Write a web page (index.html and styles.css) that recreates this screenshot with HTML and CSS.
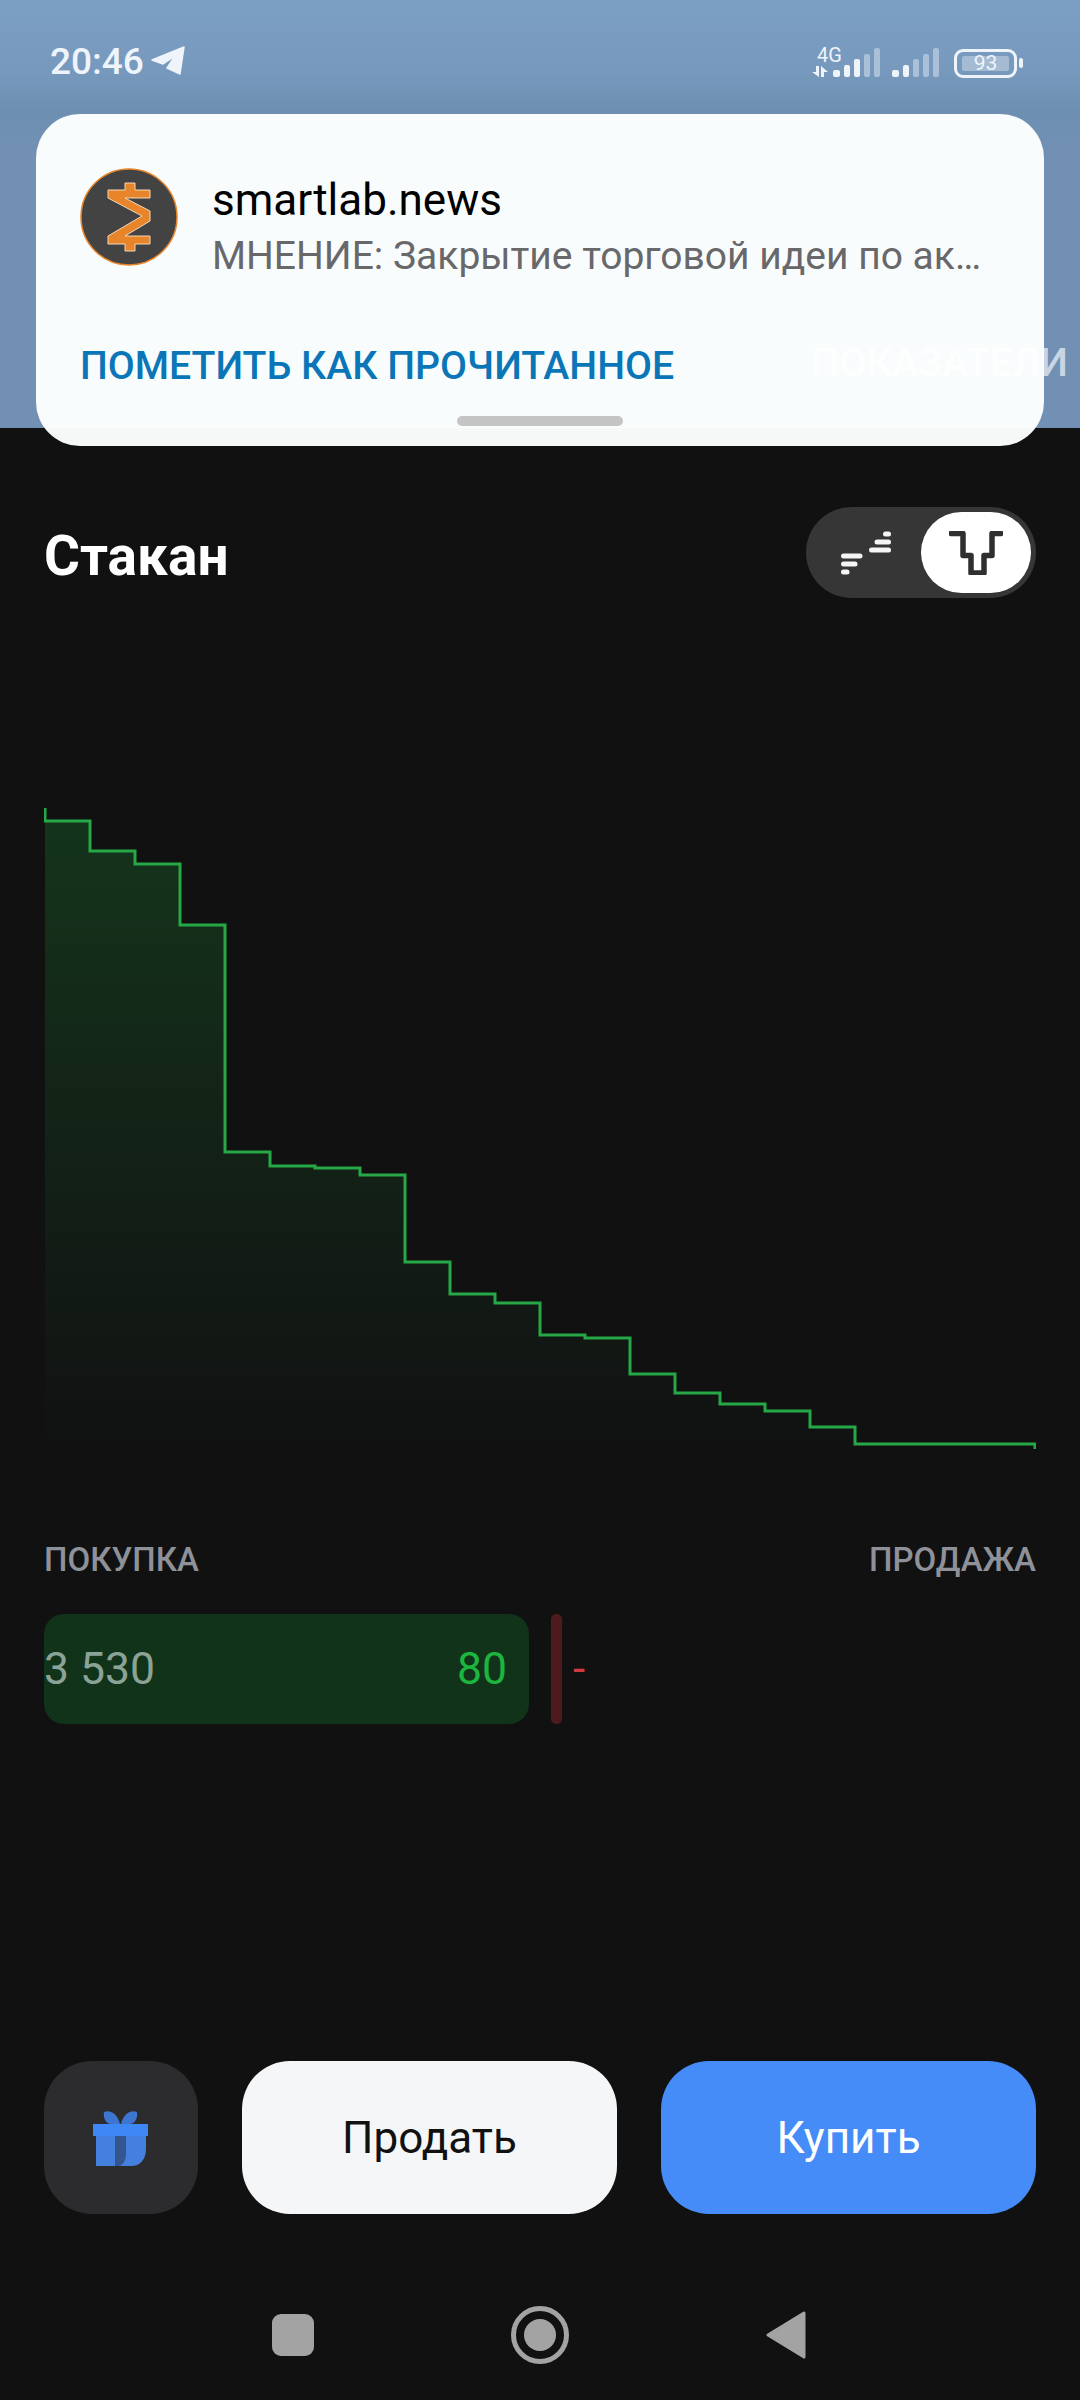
FILE: index.html
```html
<!DOCTYPE html>
<html lang="ru">
    <head>
        <meta charset="UTF-8" />
        <meta name="viewport" content="width=device-width, initial-scale=1.0" />
        <title>Стакан</title>
        <link rel="stylesheet" href="styles.css">
    </head>
    <body>
        <article id="screen">
            <header class="top">
                <div class="status">
                    <div class="status-left">
                        <span class="clock">20:46</span>
                        <svg class="plane" width="36" height="30" viewBox="0 0 36 30">
                            <path d="M1 14 L33 1 L29 28 L16 22 L24 10 L12 18 Z" fill="#eef4fa" stroke="#eef4fa" stroke-width="1.5" stroke-linejoin="round" />
                        </svg>
                    </div>
                    <div class="status-right">
                        <div class="net">
                            <span class="net-label">4G</span>
                            <svg class="net-arrows" width="16" height="11" viewBox="0 0 16 11">
                                <path d="M4 0 H7 V11 L0 6 H4 Z M9 0 L16 6 H12 V11 H9 Z" fill="#eef4fa" />
                            </svg>
                        </div>
                        <svg class="bars" width="48" height="30" viewBox="0 0 48 30">
                            <rect x="0" y="22" width="7" height="7" rx="2" fill="#eef4fa" />
                            <rect x="11" y="17" width="6" height="12" rx="2" fill="#eef4fa" />
                            <rect x="21" y="11" width="6" height="18" rx="2" fill="#eef4fa" />
                            <rect x="31" y="6" width="6" height="23" rx="2" fill="#a9c0d8" />
                            <rect x="41" y="0" width="6" height="29" rx="2" fill="#a9c0d8" />
                        </svg>
                        <svg class="bars bars-two" width="48" height="30" viewBox="0 0 48 30">
                            <rect x="0" y="22" width="7" height="7" rx="2" fill="#eef4fa" />
                            <rect x="11" y="17" width="6" height="12" rx="2" fill="#eef4fa" />
                            <rect x="21" y="11" width="6" height="18" rx="2" fill="#a9c0d8" />
                            <rect x="31" y="6" width="6" height="23" rx="2" fill="#a9c0d8" />
                            <rect x="41" y="0" width="6" height="29" rx="2" fill="#a9c0d8" />
                        </svg>
                        <div class="battery">
                            <div class="battery-box">
                                <span class="battery-fill">93</span>
                            </div>
                            <span class="battery-tip"></span>
                        </div>
                    </div>
                </div>
                <div class="tabs">ПОКАЗАТЕЛИ</div>
            </header>

            <section class="notice">
                <div class="notice-main">
                    <svg class="logo" width="98" height="98" viewBox="0 0 98 98">
                        <circle cx="49" cy="49" r="48" fill="#434343" stroke="#e8842a" stroke-width="1.5" />
                        <path d="M45 15 H55 V22 H70 V30 H45 L70 43 V53 L45 68 H70 V76 H55 V83 H45 V76 H28 V68 L62 48 L28 30 V22 H45 Z" fill="#e8842a" stroke="#f3d9b8" stroke-width="1" />
                    </svg>
                    <div class="notice-text">
                        <div class="notice-title">smartlab.news</div>
                        <div class="notice-body">МНЕНИЕ: Закрытие торговой идеи по ак…</div>
                    </div>
                </div>
                <div class="notice-action">ПОМЕТИТЬ КАК ПРОЧИТАННОЕ</div>
                <div class="handle"></div>
            </section>

            <section class="book">
                <div class="book-head">
                    <h2>Стакан</h2>
                    <div class="toggle">
                        <div class="toggle-off">
                            <svg width="50" height="44" viewBox="0 0 50 44">
                                <g fill="none" stroke="#f5f5f5" stroke-width="5" stroke-linecap="round">
                                    <path d="M2.5 25 H19" />
                                    <path d="M2.5 33 H14" />
                                    <path d="M2.5 41 H6" />
                                    <path d="M30.5 19 H47.5" />
                                    <path d="M36 11 H47.5" />
                                    <path d="M44.5 3 H47.5" />
                                </g>
                            </svg>
                        </div>
                        <div class="toggle-on">
                            <svg width="54" height="44" viewBox="0 0 54 44">
                                <path d="M2 2.5 H14 V24.5 H22 V42 H35 V24.5 H43 V2.5 H52" fill="none" stroke="#2f2f2f" stroke-width="5.5" stroke-linecap="round" stroke-linejoin="round" />
                            </svg>
                        </div>
                    </div>
                </div>

                <svg class="depth" width="992" height="660" viewBox="44 800 992 660">
                    <defs>
                        <linearGradient id="fade" x1="0" y1="0" x2="0" y2="1">
                            <stop offset="0" stop-color="#1a6f2c" stop-opacity="0.38" />
                            <stop offset="1" stop-color="#1a6f2c" stop-opacity="0" />
                        </linearGradient>
                    </defs>
                    <path d="M45 808 V821 H90 V851 H135 V864 H180 V925 H225 V1152 H270 V1166 H315 V1168 H360 V1175 H405 V1262 H450 V1294 H495 V1303 H540 V1335 H585 V1338 H630 V1374 H675 V1393 H720 V1404 H765 V1411 H810 V1427 H855 V1444 H1035 V1449 H45 Z" fill="url(#fade)" />
                    <path d="M45 808 V821 H90 V851 H135 V864 H180 V925 H225 V1152 H270 V1166 H315 V1168 H360 V1175 H405 V1262 H450 V1294 H495 V1303 H540 V1335 H585 V1338 H630 V1374 H675 V1393 H720 V1404 H765 V1411 H810 V1427 H855 V1444 H1035 V1449" fill="none" stroke="#25a845" stroke-width="3" />
                </svg>

                <div class="sides">
                    <span>ПОКУПКА</span>
                    <span>ПРОДАЖА</span>
                </div>

                <div class="levels">
                    <div class="bid">
                        <span class="price">3 530</span>
                        <span class="qty">80</span>
                    </div>
                    <div class="ask"></div>
                    <span class="ask-value">-</span>
                </div>
            </section>

            <footer class="actions">
                <button type="button" class="gift">
                    <svg width="56" height="56" viewBox="0 0 56 56">
                        <path d="M11 2 C18 -1 25 5 27 14 H18 C13 14 10 8 11 2 Z M44 2 C37 -1 30 5 28 14 H37 C42 14 45 8 44 2 Z" fill="#3d76d0" />
                        <rect x="0" y="14" width="55" height="12" fill="#3f87f5" />
                        <path d="M3 26 H53 V38 C53 50 47 56 38 56 H3 Z" fill="#4480de" />
                        <path d="M22 26 H33 V44 C33 50 30 55 26 56 H22 Z" fill="#34568f" />
                    </svg>
                </button>
                <button type="button" class="sell">Продать</button>
                <button type="button" class="buy">Купить</button>
            </footer>

            <nav class="nav">
                <span class="nav-square"></span>
                <span class="nav-home"><span class="nav-dot"></span></span>
                <svg width="40" height="48" viewBox="0 0 40 48">
                    <path d="M2 24 L38 2 V46 Z" fill="#a3a3a3" stroke="#a3a3a3" stroke-width="3" stroke-linejoin="round" />
                </svg>
            </nav>
        </article>
    </body>
</html>
```

FILE: styles.css
```css
* {
    box-sizing: border-box;
}

body {
    margin: 0;
    background-color: #111112;
    font-family: Roboto, "Noto Sans", sans-serif;
}

#screen {
    position: relative;
    display: flex;
    flex-direction: column;
    width: 1080px;
    height: 2400px;
    overflow: hidden;
}

.top {
    height: 428px;
    padding: 38px 12px 0 50px;
    background: linear-gradient(#7b9fc3, #7699bd 70px, #6d8fb1 112px, #7190b3 140px, #7190b3);
}

.status {
    display: flex;
    justify-content: space-between;
    align-items: center;
    height: 46px;
    margin-right: 45px;
}

.status-left {
    display: flex;
    align-items: center;
    gap: 7px;
}

.clock {
    font-size: 37px;
    font-weight: 500;
    color: #eef4fa;
}

.status-right {
    display: flex;
    align-items: flex-end;
}

.net {
    display: flex;
    flex-direction: column;
    width: 21px;
    color: #eef4fa;
}

.net-label {
    font-size: 20px;
    line-height: 20px;
    margin-left: 5px;
    margin-bottom: 1px;
}

.net-arrows {
    display: block;
    flex-shrink: 0;
    margin-bottom: 1px;
}

.bars {
    display: block;
}

.bars-two {
    margin-left: 11px;
}

.battery {
    display: flex;
    align-items: center;
    margin-left: 14px;
}

.battery-box {
    width: 63px;
    height: 29px;
    padding: 4px 5px;
    border: 3px solid #eef4fa;
    border-radius: 9px;
}

.battery-fill {
    display: block;
    width: 100%;
    height: 100%;
    border-radius: 2px;
    background-color: #a4bbd3;
    font-size: 21px;
    line-height: 15px;
    text-align: center;
    color: #eef4fa;
}

.battery-tip {
    width: 4px;
    height: 10px;
    margin-left: 2px;
    border-radius: 2px;
    background-color: #eef4fa;
}

.tabs {
    margin-top: 257px;
    font-size: 39.5px;
    font-weight: 500;
    line-height: 44px;
    text-align: right;
    color: rgba(255, 255, 255, 0.65);
}

/* всплывающее уведомление лежит поверх шапки */
.notice {
    position: absolute;
    top: 114px;
    left: 36px;
    width: 1008px;
    height: 332px;
    padding: 54px 44px 0;
    border-radius: 44px;
    background-color: rgba(254, 255, 255, 0.97);
}

.notice-main {
    display: flex;
    gap: 34px;
}

.logo {
    flex-shrink: 0;
}

.notice-text {
    padding-top: 8px;
}

.notice-title {
    font-size: 44px;
    line-height: 48px;
    color: #000;
}

.notice-body {
    margin-top: 7px;
    font-size: 39px;
    line-height: 50px;
    color: #68686b;
}

.notice-action {
    margin-top: 62px;
    font-size: 39.2px;
    font-weight: 500;
    line-height: 46px;
    color: #0a76b8;
}

.handle {
    position: absolute;
    left: 421px;
    bottom: 20px;
    width: 166px;
    height: 10px;
    border-radius: 5px;
    background-color: #c4c4c4;
}

.book {
    flex: 1;
    padding: 79px 44px 0;
}

.book-head {
    display: flex;
    justify-content: space-between;
    align-items: center;
    height: 91px;
}

h2 {
    margin: 6px 0 0;
    font-size: 55px;
    font-weight: 700;
    color: #fff;
}

.toggle {
    display: flex;
    align-items: center;
    justify-content: space-between;
    width: 230px;
    height: 91px;
    padding: 0 5px 0 35px;
    border-radius: 46px;
    background-color: #363636;
}

.toggle-off {
    display: flex;
}

.toggle-on {
    display: flex;
    align-items: center;
    justify-content: center;
    width: 110px;
    height: 81px;
    border-radius: 41px;
    background-color: #fff;
}

.depth {
    display: block;
    margin-top: 202px;
}

.sides {
    display: flex;
    justify-content: space-between;
    margin-top: 81px;
    font-size: 33px;
    font-weight: 500;
    line-height: 38px;
    color: #8e9199;
}

.levels {
    display: flex;
    align-items: center;
    height: 110px;
    margin-top: 35px;
}

.bid {
    display: flex;
    align-items: center;
    justify-content: space-between;
    width: 485px;
    height: 100%;
    padding-right: 22px;
    border-radius: 20px;
    background-color: #113319;
    font-size: 44.5px;
}

.price {
    color: #8aa396;
}

.qty {
    color: #1cb53f;
}

.ask {
    width: 11px;
    height: 100%;
    margin-left: 22px;
    border-radius: 5px;
    background-color: #4e1a1e;
}

.ask-value {
    margin-left: 11px;
    font-size: 44px;
    color: #d03a40;
}

.actions {
    position: absolute;
    top: 2061px;
    left: 44px;
    display: flex;
    gap: 44px;
    width: 992px;
    height: 153px;
}

button {
    height: 100%;
    border: 0;
    padding: 0;
    font-family: inherit;
    font-size: 44px;
}

.gift {
    display: flex;
    align-items: center;
    justify-content: center;
    width: 154px;
    border-radius: 48px;
    background-color: #2c2c2e;
}

.sell,
.buy {
    flex: 1;
    border-radius: 48px;
}

.sell {
    color: #111;
    background-color: #f5f6f8;
}

.buy {
    color: #fff;
    background-color: #458cf9;
}

.nav {
    position: absolute;
    top: 2307px;
    left: 272px;
    display: flex;
    justify-content: space-between;
    align-items: center;
    width: 534px;
    height: 56px;
}

.nav-square {
    width: 42px;
    height: 42px;
    border-radius: 9px;
    background-color: #a3a3a3;
}

.nav-home {
    display: flex;
    align-items: center;
    justify-content: center;
    width: 58px;
    height: 58px;
    border: 5px solid #a3a3a3;
    border-radius: 50%;
}

.nav-dot {
    width: 32px;
    height: 32px;
    border-radius: 50%;
    background-color: #a3a3a3;
}
```
